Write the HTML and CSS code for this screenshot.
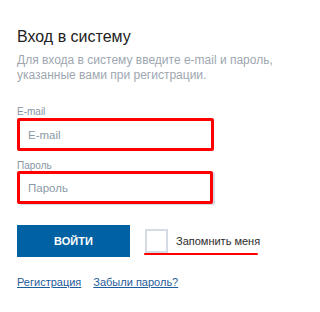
FILE: index.html
```html
<!DOCTYPE html>
<html lang="ru">
<head>
<meta charset="utf-8">
<title>Вход в систему</title>
<link rel="stylesheet" href="styles.css">
</head>
<body>
<div class="login">
  <h1 class="title">Вход в систему</h1>
  <p class="desc">Для входа в систему введите e-mail и пароль, указанные вами при регистрации.</p>
  <label class="label label-first">E-mail</label>
  <div class="input input-first"><span class="placeholder">E-mail</span></div>
  <label class="label label-second">Пароль</label>
  <div class="input input-second"><span class="placeholder">Пароль</span></div>
  <div class="actions">
    <button class="btn">ВОЙТИ</button>
    <div class="remember">
      <span class="checkbox"></span>
      <span class="remember-text">Запомнить меня</span>
    </div>
  </div>
  <div class="links">
    <a class="link" href="#">Регистрация</a>
    <a class="link" href="#">Забыли пароль?</a>
  </div>
</div>
</body>
</html>
```
FILE: styles.css
```css
html, body {
  margin: 0;
  padding: 0;
  background: #ffffff;
}
body {
  font-family: "Liberation Sans", Arial, sans-serif;
}
.login {
  padding: 26px 0 0 17px;
}
.title {
  margin: 0;
  font-size: 16px;
  line-height: 22px;
  font-weight: normal;
  color: #222222;
}
.desc {
  margin: 5px 0 0 0;
  font-size: 12px;
  line-height: 15px;
  color: #9ea7b0;
  width: 266px;
}
.label {
  display: block;
  font-size: 10px;
  line-height: 12px;
  color: #8796a4;
}
.label-first {
  margin-top: 23px;
}
.label-second {
  margin-top: 9px;
}
.input {
  box-sizing: border-box;
  width: 197px;
  height: 33px;
  border: 3px solid #ff0000;
  border-radius: 2px;
  display: flex;
  align-items: center;
  padding-left: 8px;
}
.input-second {
  width: 196px;
  margin-top: -1px;
  box-shadow: 2px 1px 0 #d4dce6;
}
.placeholder {
  font-size: 11.5px;
  color: #8a99a6;
}
.actions {
  display: flex;
  align-items: center;
  margin-top: 21px;
}
.btn {
  width: 113px;
  height: 32px;
  border: none;
  background: #0061a3;
  color: #ffffff;
  font-family: "Liberation Sans", Arial, sans-serif;
  font-weight: bold;
  font-size: 11px;
  padding: 0;
}
.remember {
  position: relative;
  display: flex;
  align-items: center;
  margin-left: 15px;
}
.remember::after {
  content: "";
  position: absolute;
  left: -1px;
  right: 2px;
  bottom: -2px;
  height: 2px;
  background: #ff0000;
  border-radius: 1px;
}
.checkbox {
  box-sizing: border-box;
  width: 23px;
  height: 24px;
  border: 2px solid #d3dce5;
}
.remember-text {
  margin-left: 8px;
  font-size: 11px;
  color: #2b2b2b;
}
.links {
  display: flex;
  gap: 12px;
  margin-top: 18px;
  line-height: 14px;
}
.link {
  font-size: 11px;
  color: #1f5c99;
  text-decoration: underline;
}
```
